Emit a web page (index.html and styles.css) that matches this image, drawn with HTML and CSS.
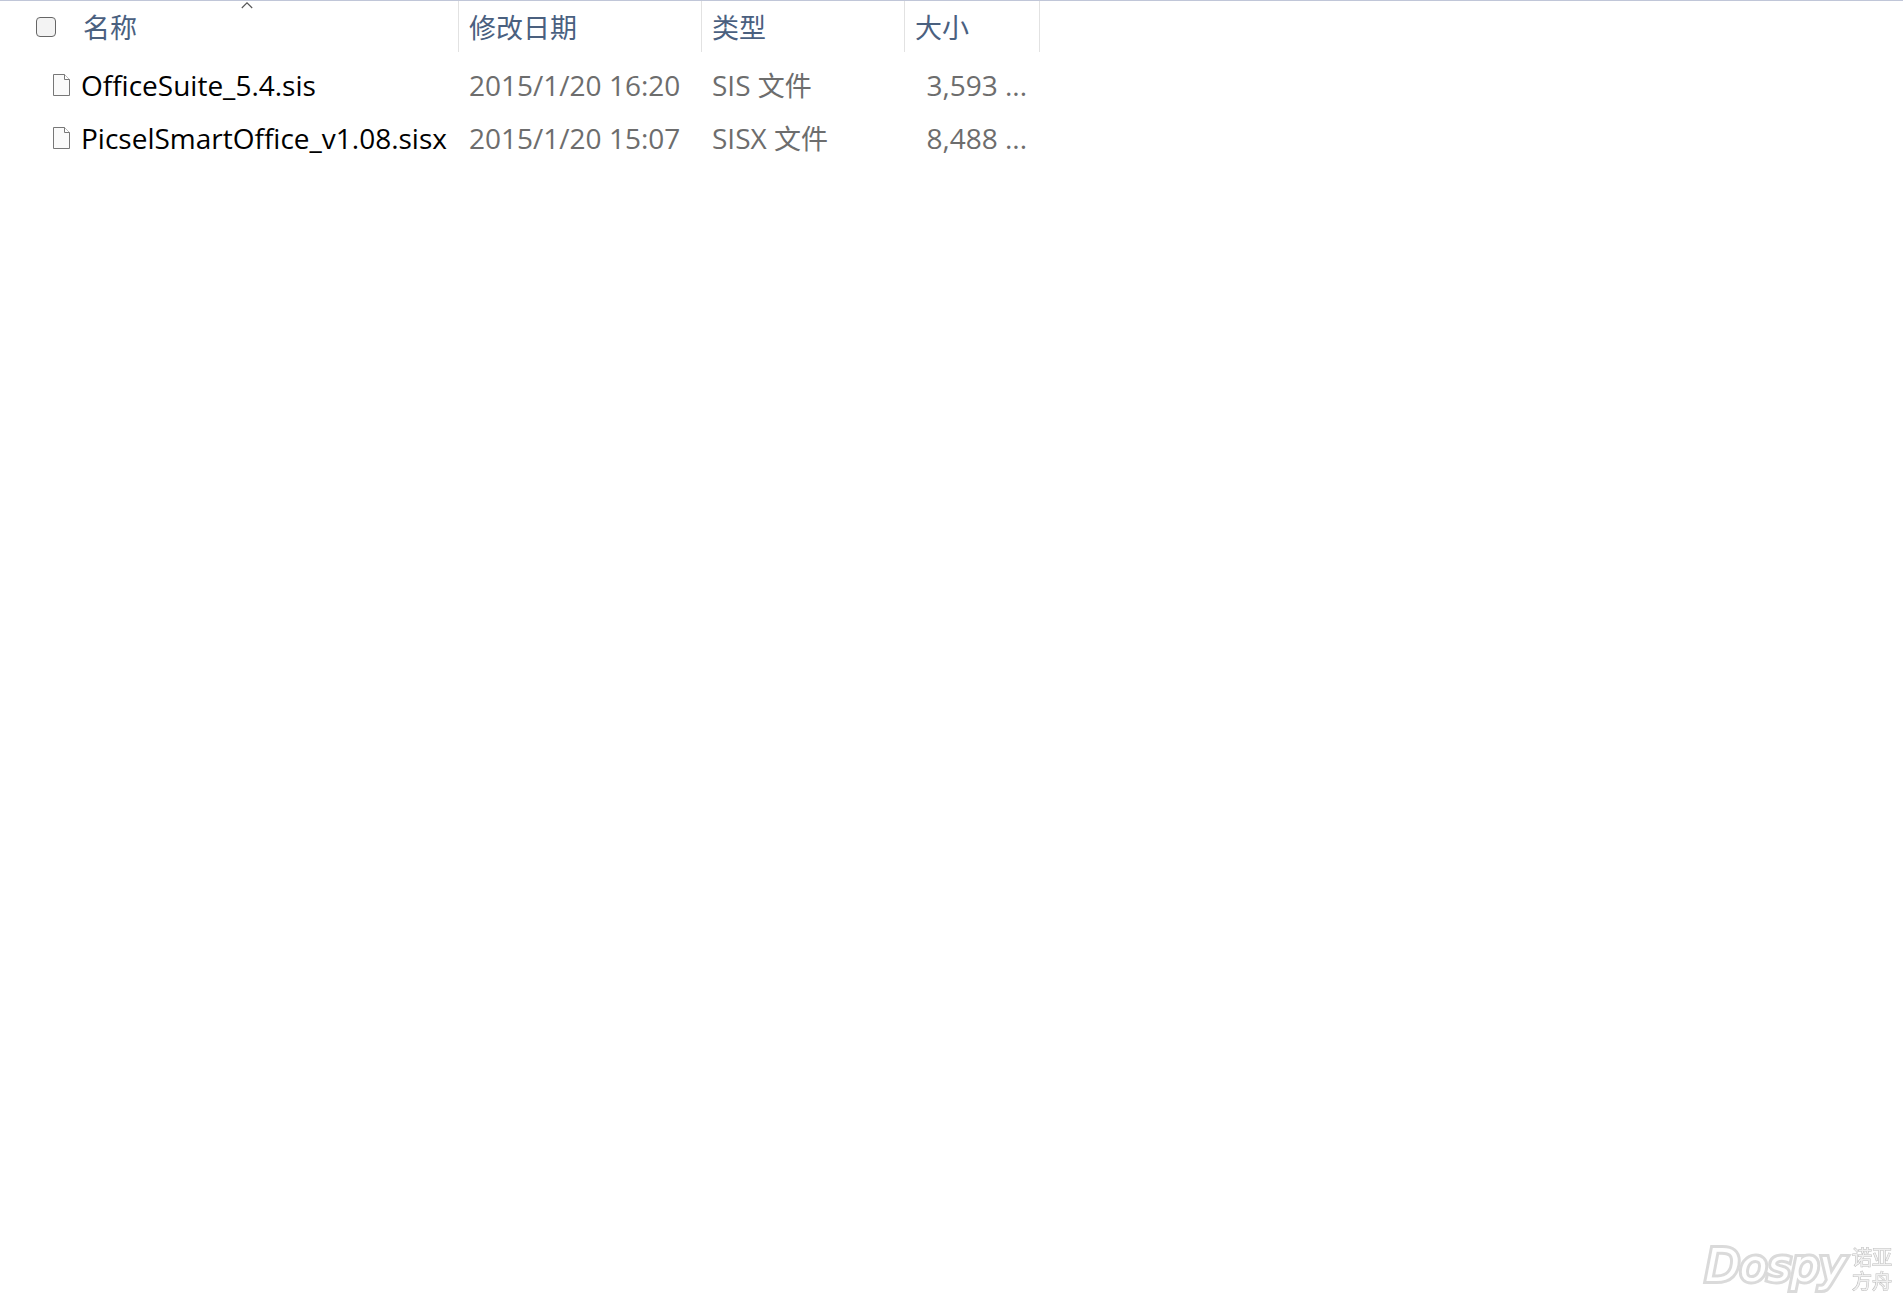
FILE: index.html
```html
<!DOCTYPE html>
<html lang="zh-CN">
<head>
<meta charset="utf-8">
<title>文件</title>
<link rel="stylesheet" href="styles.css">
</head>
<body>
<main class="explorer">
  <table class="files">
    <colgroup>
      <col class="col-name">
      <col class="col-date">
      <col class="col-type">
      <col class="col-size">
    </colgroup>
    <thead>
      <tr>
        <th scope="col" aria-sort="ascending">
          <div class="name-head">
            <input class="select-all" type="checkbox" id="select-all" aria-label="全选">
            <span>名称</span>
          </div>
          <svg class="sort" width="12" height="7" viewBox="0 0 12 7" aria-hidden="true"><path d="M.8 6 6 .8 11.2 6" fill="none" stroke="#555" stroke-width="1.1"/></svg>
        </th>
        <th scope="col">修改日期</th>
        <th scope="col">类型</th>
        <th scope="col">大小</th>
      </tr>
    </thead>
    <tbody>
      <tr>
        <td>
          <div class="file">
            <svg width="18" height="22" viewBox="0 0 18 22" aria-hidden="true"><path d="M.5.5h11l5 5v16H.5z" fill="#fafafa" stroke="#777"/><path d="M11.5.5v5h5" fill="#fff" stroke="#777"/></svg>
            <span>OfficeSuite_5.4.sis</span>
          </div>
        </td>
        <td>2015/1/20 16:20</td>
        <td>SIS <span class="cjk">文件</span></td>
        <td class="size">3,593 ...</td>
      </tr>
      <tr>
        <td>
          <div class="file">
            <svg width="18" height="22" viewBox="0 0 18 22" aria-hidden="true"><path d="M.5.5h11l5 5v16H.5z" fill="#fafafa" stroke="#777"/><path d="M11.5.5v5h5" fill="#fff" stroke="#777"/></svg>
            <span>PicselSmartOffice_v1.08.sisx</span>
          </div>
        </td>
        <td>2015/1/20 15:07</td>
        <td>SISX <span class="cjk">文件</span></td>
        <td class="size">8,488 ...</td>
      </tr>
    </tbody>
  </table>
</main>
<div class="watermark">
  <span class="brand">Dospy</span>
  <span class="brand-cn">诺亚<br>方舟</span>
</div>
</body>
</html>
```
FILE: styles.css
```css
* {
  box-sizing: border-box;
}

body {
  margin: 0;
  background: #fff;
  color: #6d6d6d;
  font: 28px/36px "Open Sans", "Noto Sans CJK SC", sans-serif;
  font-variant-ligatures: none;
}

.explorer {
  border-top: 1px solid #c0c6d8;
}

.files {
  table-layout: fixed;
  width: 1040px;
  border-collapse: separate;
  border-spacing: 0;
}

.col-name { width: 459px; }
.col-date { width: 243px; }
.col-type { width: 203px; }
.col-size { width: 135px; }

th {
  position: relative;
  height: 51px;
  padding: 0 0 0 10px;
  border-right: 1px solid #e2e2e2;
  color: #4a607f;
  font: 27px/36px "Noto Sans CJK SC", sans-serif;
  text-align: left;
}

td {
  height: 53px;
  padding: 0 0 4px 10px;
  white-space: nowrap;
}

tbody::before {
  content: "";
  display: block;
  height: 8px;
}

.cjk {
  font-size: 27px;
  line-height: 1;
}

.name-head {
  display: flex;
  align-items: center;
  gap: 27px;
  padding-left: 26px;
}

.select-all {
  appearance: none;
  width: 20px;
  height: 20px;
  margin: 0;
  border: 1px solid #666;
  border-radius: 4px;
  background: #f3f3f3;
}

.sort {
  position: absolute;
  top: 1px;
  right: 205px;
}

.file {
  display: flex;
  align-items: center;
  gap: 10px;
  padding-left: 43px;
  color: #000;
}

.size {
  padding-left: 0;
  padding-right: 13px;
  text-align: right;
}

.watermark {
  position: fixed;
  right: 11px;
  bottom: 6px;
  display: flex;
  align-items: flex-end;
  gap: 6px;
}

.brand {
  padding-bottom: 2px;
  color: #fff;
  font: italic 45px/52px "DejaVu Sans", sans-serif;
  paint-order: stroke fill;
  -webkit-text-stroke: 6px #dadada;
  text-shadow: 0 0 2px #ddd;
}

.brand-cn {
  color: #f0f0f0;
  font: 20px/24px "Liberation Sans", "Noto Sans CJK SC", sans-serif;
  paint-order: stroke fill;
  -webkit-text-stroke: 1px #bbb;
}
```
